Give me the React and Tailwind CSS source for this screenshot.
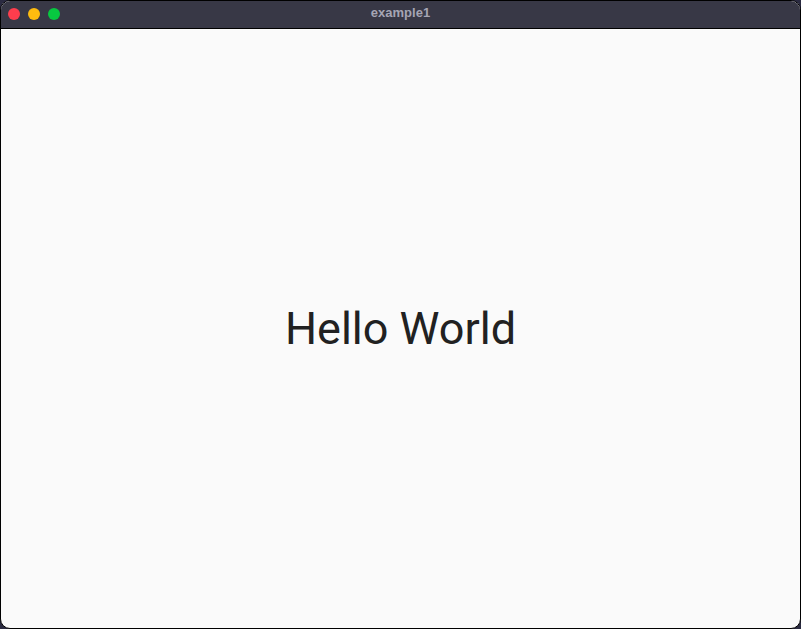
export default function App() {
    return (
        <div className="w-[801px] h-[629px] bg-[#2a2a40]">
            <div className="w-full h-full flex flex-col rounded-[10px] overflow-hidden border border-black bg-[#fafafa]">
                <div className="relative h-[28px] shrink-0 flex items-center pb-[1px] bg-[#383846] border-b border-black">
                    <div className="flex items-center gap-[8px] pl-[7px]">
                        <span className="w-[12px] h-[12px] rounded-full bg-[#fe3d4d]" />
                        <span className="w-[12px] h-[12px] rounded-full bg-[#fdbb0f]" />
                        <span className="w-[12px] h-[12px] rounded-full bg-[#07c840]" />
                    </div>
                    <div className="absolute inset-0 flex items-center justify-center pb-[3px] text-[13px] font-bold text-[#a5a5b4] font-['Liberation_Sans',sans-serif]">
                        example1
                    </div>
                </div>
                <div className="flex-1 flex items-center justify-center">
                    <span className="text-[45px] text-[#212121] font-['Roboto',sans-serif]">Hello World</span>
                </div>
            </div>
        </div>
    );
}
